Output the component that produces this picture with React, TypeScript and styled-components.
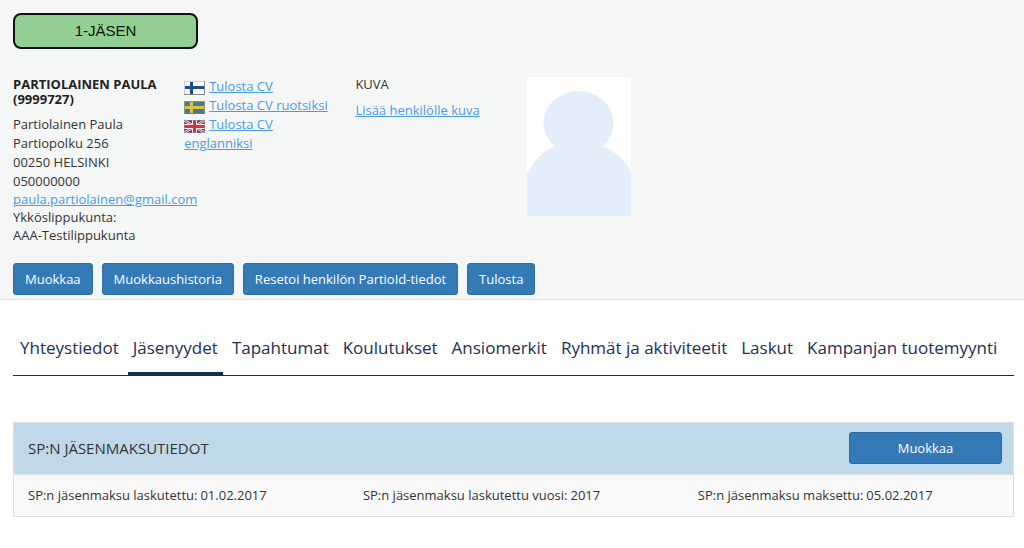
import React from 'react';
import styled, { createGlobalStyle } from 'styled-components';

const GlobalStyle = createGlobalStyle`
  *, *::before, *::after { box-sizing: border-box; }
  body {
    margin: 0;
    background: #fff;
    color: #333;
    font: 13px/19px "Open Sans", "Noto Sans", sans-serif;
  }
`;

const ProfileHeader = styled.header`
  padding: 13px 4px 4px 13px;
  background: #f5f7f7;
  border-bottom: 1px solid #dee2e2;
`;

const StatusBadge = styled.div`
  width: 185px;
  padding: 5px 0;
  border: 2px solid #0c120c;
  border-radius: 8px;
  background: #93cf93;
  color: #0b140b;
  font: 15px/22px "Liberation Sans", Arial, sans-serif;
  text-align: center;
`;

const ProfileColumns = styled.div`
  display: flex;
  margin-top: 28px;
`;

const ProfileColumn = styled.section`
  flex: 0 0 17%;
  min-width: 0;
`;

const PersonName = styled.h1`
  margin: 0 0 8px;
  color: #222;
  font-size: 13px;
  line-height: 15px;
  font-weight: 700;
`;

const ColumnTitle = styled.h2`
  margin: 0 0 9px;
  font-size: 13px;
  line-height: 15px;
  font-weight: 400;
`;

const Address = styled.address`
  font-style: normal;
  white-space: nowrap;
`;

const ContactDetails = styled.p`
  margin: 0;
  line-height: 18px;
  white-space: nowrap;
`;

const Link = styled.a`
  color: #4a9ae8;
  text-decoration: underline;
`;

const CvList = styled.ul`
  margin: 0;
  padding: 0 16px 0 0;
  list-style: none;
`;

const FlagIcon = styled.svg`
  width: 21px;
  height: 14px;
  margin-right: 4px;
  vertical-align: -4px;
`;

const Portrait = styled.svg`
  display: block;
  width: 104px;
  height: 139px;
  background: #fff;
`;

const Actions = styled.div`
  display: flex;
  flex-wrap: wrap;
  gap: 9px;
  margin-top: 19px;
`;

const Button = styled.button<{ $wide?: boolean }>`
  width: ${({ $wide }) => ($wide ? '153px' : 'auto')};
  height: 32px;
  padding: 0 11px;
  border: 1px solid #2e6da4;
  border-radius: 3px;
  background: #337ab7;
  color: #fff;
  font: inherit;
  cursor: pointer;
`;

const Content = styled.main`
  padding: 28px 10px 32px 13px;
`;

const Tabs = styled.nav`
  display: flex;
  gap: 4px;
  padding-left: 2px;
  border-bottom: 1px solid #1c2a3c;
`;

const Tab = styled.a<{ $active?: boolean }>`
  padding: 8px 5px 12px;
  border-bottom: 3px solid ${({ $active }) => ($active ? '#17304e' : 'transparent')};
  color: #1c3055;
  font-size: 17px;
  line-height: 24px;
  text-decoration: none;
  white-space: nowrap;
`;

const Panel = styled.section`
  margin-top: 46px;
  border: 1px solid #ddd;
  background: #f9f9f9;
`;

const PanelHeader = styled.div`
  display: flex;
  align-items: center;
  justify-content: space-between;
  padding: 9px 11px 9px 14px;
  border-bottom: 2px solid #d8dadc;
  background: #bfd8ea;
`;

const PanelTitle = styled.h2`
  margin: 0;
  font-size: 15px;
  line-height: 20px;
  font-weight: 400;
`;

const Facts = styled.dl`
  display: grid;
  grid-template-columns: 34% 34% 1fr;
  margin: 0;
  padding: 11px 0 11px 14px;
`;

const Fact = styled.div`
  display: flex;
  gap: 3px;
  white-space: nowrap;

  dt, dd { margin: 0; }
`;

const FinnishFlag = () => (
  <FlagIcon viewBox="0 0 21 14" aria-hidden="true">
    <rect x="0.5" y="0.5" width="20" height="13" fill="#fafafa" stroke="#c9cdd1" />
    <path d="M1 6.5h19M7.5 1v12" stroke="#184f91" strokeWidth="3" />
    <path d="M0 13.5h21M20.5 0v14" stroke="#85888b" />
  </FlagIcon>
);

const SwedishFlag = () => (
  <FlagIcon viewBox="0 0 21 14" aria-hidden="true">
    <rect x="0.5" y="1.5" width="20" height="12" fill="#4c7889" stroke="#8b9682" />
    <path d="M1 7.5h19M7.5 2v11" stroke="#dcc343" strokeWidth="3" />
    <path d="M0 13.5h21" stroke="#777b61" />
  </FlagIcon>
);

const BritishFlag = () => (
  <FlagIcon viewBox="0 0 21 14" aria-hidden="true">
    <rect y="1" width="21" height="13" fill="#344684" />
    <path d="M0 1l21 13M21 1L0 14" stroke="#f3e6ea" strokeWidth="2.500" />
    <path d="M0 1l21 13M21 1L0 14" stroke="#d4364b" />
    <path d="M0 7.5h21M10.5 1v13" stroke="#fbeef0" strokeWidth="5" />
    <path d="M0 7.5h21M10.5 1v13" stroke="#d92f42" strokeWidth="3" />
    <rect x="0.5" y="1.5" width="20" height="12" fill="none" stroke="#9c91a4" strokeOpacity="0.5" />
  </FlagIcon>
);

const cvLinks = [
  { Flag: FinnishFlag, label: 'Tulosta CV' },
  { Flag: SwedishFlag, label: 'Tulosta CV ruotsiksi' },
  { Flag: BritishFlag, label: 'Tulosta CV englanniksi' },
];

const actions = ['Muokkaa', 'Muokkaushistoria', 'Resetoi henkilön PartioId-tiedot', 'Tulosta'];

const tabs = [
  'Yhteystiedot',
  'Jäsenyydet',
  'Tapahtumat',
  'Koulutukset',
  'Ansiomerkit',
  'Ryhmät ja aktiviteetit',
  'Laskut',
  'Kampanjan tuotemyynti',
];

const facts = [
  ['SP:n jäsenmaksu laskutettu:', '01.02.2017'],
  ['SP:n jäsenmaksu laskutettu vuosi:', '2017'],
  ['SP:n jäsenmaksu maksettu:', '05.02.2017'],
];

export default function App() {
  return (
    <>
      <GlobalStyle />
      <ProfileHeader>
        <StatusBadge>1-JÄSEN</StatusBadge>
        <ProfileColumns>
          <ProfileColumn>
            <PersonName>PARTIOLAINEN PAULA (9999727)</PersonName>
            <Address>
              Partiolainen Paula<br />
              Partiopolku 256<br />
              00250 HELSINKI
            </Address>
            <ContactDetails>
              050000000<br />
              <Link href="mailto:paula.partiolainen@gmail.com">paula.partiolainen@gmail.com</Link><br />
              Ykköslippukunta:<br />
              AAA-Testilippukunta
            </ContactDetails>
          </ProfileColumn>
          <ProfileColumn>
            <CvList>
              {cvLinks.map(({ Flag, label }) => (
                <li key={label}>
                  <Flag />
                  <Link href="#cv">{label}</Link>
                </li>
              ))}
            </CvList>
          </ProfileColumn>
          <ProfileColumn>
            <ColumnTitle>KUVA</ColumnTitle>
            <Link href="#kuva">Lisää henkilölle kuva</Link>
          </ProfileColumn>
          <ProfileColumn>
            <Portrait viewBox="0 0 104 139" aria-hidden="true">
              <ellipse cx="51.500" cy="46" rx="35" ry="32" fill="#e4eefa" />
              <path d="M0 97C7 83 16 74 28 69C40 66 64 66 75 69C88 74 98 83 104 95V139H0Z" fill="#e4eefa" />
            </Portrait>
          </ProfileColumn>
        </ProfileColumns>
        <Actions>
          {actions.map((label) => (
            <Button key={label} type="button">{label}</Button>
          ))}
        </Actions>
      </ProfileHeader>
      <Content>
        <Tabs>
          {tabs.map((label) => {
            const active = label === 'Jäsenyydet';
            return (
              <Tab key={label} href="#tab" $active={active} aria-current={active ? 'page' : undefined}>
                {label}
              </Tab>
            );
          })}
        </Tabs>
        <Panel>
          <PanelHeader>
            <PanelTitle>SP:N JÄSENMAKSUTIEDOT</PanelTitle>
            <Button type="button" $wide>Muokkaa</Button>
          </PanelHeader>
          <Facts>
            {facts.map(([term, value]) => (
              <Fact key={term}>
                <dt>{term}</dt>
                <dd>{value}</dd>
              </Fact>
            ))}
          </Facts>
        </Panel>
      </Content>
    </>
  );
}
